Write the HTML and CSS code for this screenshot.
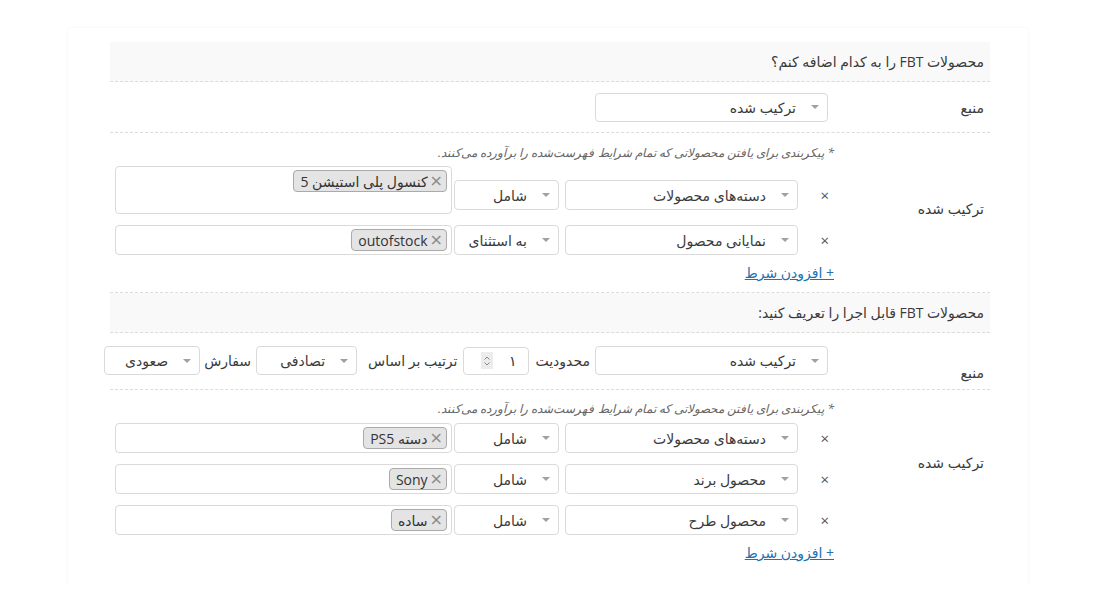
FILE: index.html
```html
<!DOCTYPE html>
<html lang="fa" dir="rtl">
<head>
<meta charset="utf-8">
<title>FBT</title>
<link rel="stylesheet" href="styles.css">
</head>
<body>
<div class="panel">
  <div class="sec-head">محصولات FBT را به کدام اضافه کنم؟</div>
  <div class="row row-src1">
    <div class="lbl">منبع</div>
    <div class="field field-src"><div class="sel w232"><i class="arr"></i><span>ترکیب شده</span></div></div>
  </div>
  <div class="row row-cond row-cond1">
    <div class="lbl lbl-c1">ترکیب شده</div>
    <div class="field">
      <div class="note">* پیکربندی برای یافتن محصولاتی که تمام شرایط فهرست‌شده را برآورده می‌کنند.</div>
      <div class="conds">
        <div class="cond cond-tall">
          <span class="rm">×</span>
          <div class="sel w232"><i class="arr"></i><span>دسته‌های محصولات</span></div>
          <div class="sel w104"><i class="arr"></i><span>شامل</span></div>
          <div class="multi multi-tall"><span class="tag"><b>×</b><span>کنسول پلی استیشن 5</span></span></div>
        </div>
        <div class="cond">
          <span class="rm">×</span>
          <div class="sel w232"><i class="arr"></i><span>نمایانی محصول</span></div>
          <div class="sel w104"><i class="arr"></i><span>به استثنای</span></div>
          <div class="multi"><span class="tag"><b>×</b><span class="lat">outofstock</span></span></div>
        </div>
      </div>
      <a class="add" href="#">+ افزودن شرط</a>
    </div>
  </div>
  <div class="sec-head">محصولات FBT قابل اجرا را تعریف کنید:</div>
  <div class="row row-src2">
    <div class="lbl lbl-src2">منبع</div>
    <div class="field field-inline">
      <div class="sel w232"><i class="arr"></i><span>ترکیب شده</span></div>
      <span class="txt t-limit">محدودیت</span>
      <div class="num"><span class="num-v">١</span><span class="spin"><svg width="8" height="12" viewBox="0 0 8 12"><path d="M1.5 4.5 L4 2 L6.5 4.5 M1.5 7.5 L4 10 L6.5 7.5" fill="none" stroke="#888" stroke-width="1"/></svg></span></div>
      <span class="txt t-order">ترتیب بر اساس</span>
      <div class="sel w100"><i class="arr"></i><span>تصادفی</span></div>
      <span class="txt t-sort">سفارش</span>
      <div class="sel w95"><i class="arr"></i><span>صعودی</span></div>
    </div>
  </div>
  <div class="row row-cond row-cond2">
    <div class="lbl lbl-c2">ترکیب شده</div>
    <div class="field">
      <div class="note">* پیکربندی برای یافتن محصولاتی که تمام شرایط فهرست‌شده را برآورده می‌کنند.</div>
      <div class="conds">
        <div class="cond">
          <span class="rm">×</span>
          <div class="sel w232"><i class="arr"></i><span>دسته‌های محصولات</span></div>
          <div class="sel w104"><i class="arr"></i><span>شامل</span></div>
          <div class="multi"><span class="tag"><b>×</b><span>دسته PS5</span></span></div>
        </div>
        <div class="cond">
          <span class="rm">×</span>
          <div class="sel w232"><i class="arr"></i><span>محصول برند</span></div>
          <div class="sel w104"><i class="arr"></i><span>شامل</span></div>
          <div class="multi"><span class="tag"><b>×</b><span class="lat">Sony</span></span></div>
        </div>
        <div class="cond">
          <span class="rm">×</span>
          <div class="sel w232"><i class="arr"></i><span>محصول طرح</span></div>
          <div class="sel w104"><i class="arr"></i><span>شامل</span></div>
          <div class="multi"><span class="tag"><b>×</b><span>ساده</span></span></div>
        </div>
      </div>
      <a class="add" href="#">+ افزودن شرط</a>
    </div>
  </div>
</div>
</body>
</html>
```

FILE: styles.css
```css
html, body {
  margin: 0;
  padding: 0;
  background: #ffffff;
}
body {
  font-family: "Open Sans", "DejaVu Sans", sans-serif;
  font-size: 14px;
  color: #3c3c3c;
}
.panel {
  box-sizing: border-box;
  width: 960px;
  height: 557px;
  margin: 28px 72px 0 0;
  padding: 14px 38px 0 42px;
  background: #fff;
  box-shadow: 0 0 3px rgba(0, 0, 0, 0.05);
}
.sec-head {
  height: 40px;
  box-sizing: border-box;
  border-bottom: 1px dashed #dcdcdc;
  background: #f9f9f9;
  padding-right: 6px;
  display: flex;
  align-items: center;
  color: #3a3a3a;
  letter-spacing: -0.1px;
}
.row {
  display: grid;
  grid-template-columns: 156px 1fr;
  border-bottom: 1px dashed #dcdcdc;
}
.lbl {
  padding-right: 6px;
  color: #3a3a3a;
}
.row-src1 {
  height: 51px;
  box-sizing: border-box;
  align-items: center;
}
.field-src {
  padding-right: 6px;
}
.sel {
  box-sizing: border-box;
  height: 29px;
  border: 1px solid #dadada;
  border-radius: 4px;
  background: #fff;
  display: flex;
  align-items: center;
  padding-right: 8px;
  color: #3a3a3a;
  white-space: nowrap;
  flex: none;
}
.arr {
  width: 0;
  height: 0;
  border-left: 4px solid transparent;
  border-right: 4px solid transparent;
  border-top: 4px solid #a0a0a0;
  margin-left: 15px;
  flex: none;
}
.w232 { width: 233px; }
.w104 { width: 105px; }
.w100 { width: 101px; }
.w95 { width: 96px; }

.row-cond1 { height: 160px; box-sizing: border-box; }
.row-cond2 { height: 195px; box-sizing: border-box; border-bottom: none; }
.lbl-c1 { padding-top: 66px; }
.lbl-c2 { padding-top: 63px; }
.note {
  font-size: 12px;
  font-style: italic;
  color: #666;
  padding-top: 11px;
  height: 21px;
}
.row-cond2 .note { padding-top: 10px; height: 20px; }
.conds {
  margin-top: 1px;
  display: flex;
  flex-direction: column;
  gap: 11px;
}
.row-cond2 .conds { gap: 11px; margin-top: 3px; }
.cond {
  display: flex;
  align-items: center;
}
.cond-tall {
  align-items: flex-end;
}
.cond-tall .sel, .cond-tall .rm {
  margin-bottom: 4px;
}
.rm {
  width: 36px;
  flex: none;
  box-sizing: border-box;
  padding-right: 5px;
  font-size: 15px;
  color: #555;
  line-height: 29px;
}
.cond .w104 { margin-right: 6px; }
.multi {
  box-sizing: border-box;
  margin-right: 2px;
  width: 337px;
  height: 30px;
  border: 1px solid #dadada;
  border-radius: 4px;
  background: #fff;
  padding: 3px 4px 0 0;
  flex: none;
}
.cond .sel { height: 30px; }
.multi-tall {
  height: 48px;
}
.tag {
  display: inline-flex;
  align-items: center;
  box-sizing: border-box;
  height: 22px;
  padding: 0 3px 0 6px;
  background: #e4e4e4;
  border: 1px solid #aaa;
  border-radius: 4px;
  color: #333;
  white-space: nowrap;
}
.tag b {
  font-family: "DejaVu Sans", sans-serif;
  font-weight: normal;
  color: #8a8a8a;
  font-size: 16px;
  line-height: 16px;
  margin-left: 2px;
}
.lat { font-family: "Open Sans", sans-serif; }
.add {
  display: inline-block;
  margin-top: 8px;
  color: #2271b1;
  text-decoration: underline;
}
.row-src2 {
  height: 57px;
  box-sizing: border-box;
}
.lbl-src2 { padding-top: 30px; }
.field-inline {
  display: flex;
  align-items: center;
  padding-right: 6px;
  padding-top: 13px;
  align-self: start;
  margin-left: -6px;
  white-space: nowrap;
}
.field-inline .sel { height: 29px; }
.txt { color: #3a3a3a; }
.t-limit { margin: 0 5px 0 6px; }
.t-order { margin: 0 6px 0 11px; }
.t-sort { margin: 0 5px 0 4px; }
.num {
  box-sizing: border-box;
  width: 66px;
  height: 28px;
  border: 1px solid #dadada;
  border-radius: 4px;
  display: flex;
  align-items: center;
  padding-right: 12px;
  flex: none;
}
.num-v { width: 8px; color: #333; }
.spin {
  width: 12px;
  height: 17px;
  margin-right: 15px;
  background: #ececec;
  display: flex;
  align-items: center;
  justify-content: center;
}
```
